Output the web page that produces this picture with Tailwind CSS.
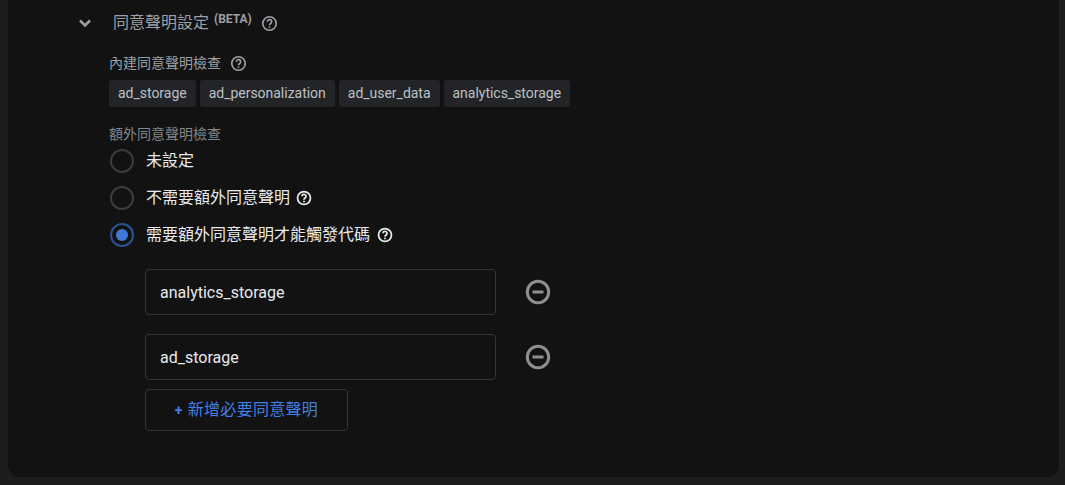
<!DOCTYPE html>
<html lang="zh-Hant">
<head>
    <meta charset="UTF-8">
    <title>同意聲明設定</title>
    <script src="https://cdn.jsdelivr.net/npm/@tailwindcss/browser@4"></script>
</head>
<body class="bg-[#1b1d1f] h-[485px] overflow-hidden font-['Roboto','Noto_Sans_CJK_TC',sans-serif]">
    <div class="ml-2 mr-[5px] h-[477px] bg-[#121212] rounded-b-xl border-r border-[#232527] pt-[12px]">

        <!-- section header -->
        <div class="flex items-center h-[22px] pl-[69px]">
            <svg class="w-4 h-4 text-[#9aa0a6]" viewBox="0 0 16 16" fill="none" stroke="currentColor" stroke-width="2.6"><path d="M3 5.5l5 5 5-5"/></svg>
            <span class="ml-[20px] text-base leading-[22px] text-[#9aa0a6]">同意聲明設定</span>
            <span class="ml-[5px] -mt-[9px] text-xs font-bold leading-none text-[#9aa0a6]">(BETA)</span>
            <svg class="ml-[9px] w-[17px] h-[17px] text-[#9aa0a6]" viewBox="0 0 24 24" fill="none" stroke="currentColor" stroke-width="2.4"><circle cx="12" cy="12" r="9.5"/><path d="M9 9.5a3 3 0 1 1 4.6 2.5c-1 .7-1.6 1.3-1.6 2.5"/><path d="M12 16.2v2"/></svg>
        </div>

        <div class="pl-[101px]">
            <!-- built in checks -->
            <div class="mt-[19px] flex items-center h-5 text-sm text-[#9aa0a6]">
                內建同意聲明檢查
                <svg class="ml-[9px] w-[17px] h-[17px]" viewBox="0 0 24 24" fill="none" stroke="currentColor" stroke-width="2.4"><circle cx="12" cy="12" r="9.5"/><path d="M9 9.5a3 3 0 1 1 4.6 2.5c-1 .7-1.6 1.3-1.6 2.5"/><path d="M12 16.2v2"/></svg>
            </div>
            <div class="mt-[7px] flex gap-1 text-sm tracking-[-0.02px] text-[#bdc1c6]">
                <span class="h-[27px] px-[9px] leading-[27px] bg-[#222427] rounded-[3px]">ad_storage</span>
                <span class="h-[27px] px-[9px] leading-[27px] bg-[#222427] rounded-[3px]">ad_personalization</span>
                <span class="h-[27px] px-[9px] leading-[27px] bg-[#222427] rounded-[3px]">ad_user_data</span>
                <span class="h-[27px] px-[9px] leading-[27px] bg-[#222427] rounded-[3px]">analytics_storage</span>
            </div>

            <!-- additional checks -->
            <div class="mt-[17px] h-5 leading-5 text-sm text-[#80868b]">額外同意聲明檢查</div>
            <div class="mt-[5px] flex flex-col gap-[13px] ml-[1px]">
                <label class="flex items-center h-6 text-[#e8eaed] text-base">
                    <span class="w-6 h-6 rounded-full border-2 border-[#3c3c3c]"></span>
                    <span class="ml-3">未設定</span>
                </label>
                <label class="flex items-center h-6 text-[#e8eaed] text-base">
                    <span class="w-6 h-6 rounded-full border-2 border-[#3c3c3c]"></span>
                    <span class="ml-3">不需要額外同意聲明</span>
                    <svg class="ml-[6px] w-4 h-4" viewBox="0 0 24 24" fill="none" stroke="currentColor" stroke-width="2.6"><circle cx="12" cy="12" r="9.7"/><path d="M9 9.5a3 3 0 1 1 4.6 2.5c-1 .7-1.6 1.3-1.6 2.5"/><path d="M12 16.2v2"/></svg>
                </label>
                <label class="flex items-center h-6 text-[#e8eaed] text-base">
                    <span class="w-6 h-6 rounded-full border-2 border-[#2b5394] flex items-center justify-center"><span class="w-3 h-3 rounded-full bg-[#3f78d8]"></span></span>
                    <span class="ml-3">需要額外同意聲明才能觸發代碼</span>
                    <svg class="ml-[7px] w-4 h-4" viewBox="0 0 24 24" fill="none" stroke="currentColor" stroke-width="2.6"><circle cx="12" cy="12" r="9.7"/><path d="M9 9.5a3 3 0 1 1 4.6 2.5c-1 .7-1.6 1.3-1.6 2.5"/><path d="M12 16.2v2"/></svg>
                </label>
            </div>

            <!-- required consent -->
            <div class="mt-[22px] ml-9">
                <div class="flex items-center">
                    <div class="w-[351px] h-[46px] px-[14px] leading-[46px] border border-[#333537] rounded-[4px] text-base text-[#e8eaed]">analytics_storage</div>
                    <svg class="ml-[29px] w-[26px] h-[26px] text-[#8f8f8f]" viewBox="0 0 26 26" fill="none" stroke="currentColor" stroke-width="3"><circle cx="13" cy="13" r="10.7"/><path d="M7.5 13h11"/></svg>
                </div>
                <div class="mt-[19px] flex items-center">
                    <div class="w-[351px] h-[46px] px-[14px] leading-[45px] border border-[#333537] rounded-[4px] text-base text-[#e8eaed]">ad_storage</div>
                    <svg class="ml-[29px] w-[26px] h-[26px] text-[#8f8f8f]" viewBox="0 0 26 26" fill="none" stroke="currentColor" stroke-width="3"><circle cx="13" cy="13" r="10.7"/><path d="M7.5 13h11"/></svg>
                </div>
                <button class="mt-[9px] flex items-center justify-center w-[203px] h-[42px] border border-[#333537] rounded-[4px] text-base text-[#3f7fe8] tracking-[0.3px]"><span class="font-bold text-sm mr-[5px]">+</span>新增必要同意聲明</button>
            </div>
        </div>
    </div>
</body>
</html>
